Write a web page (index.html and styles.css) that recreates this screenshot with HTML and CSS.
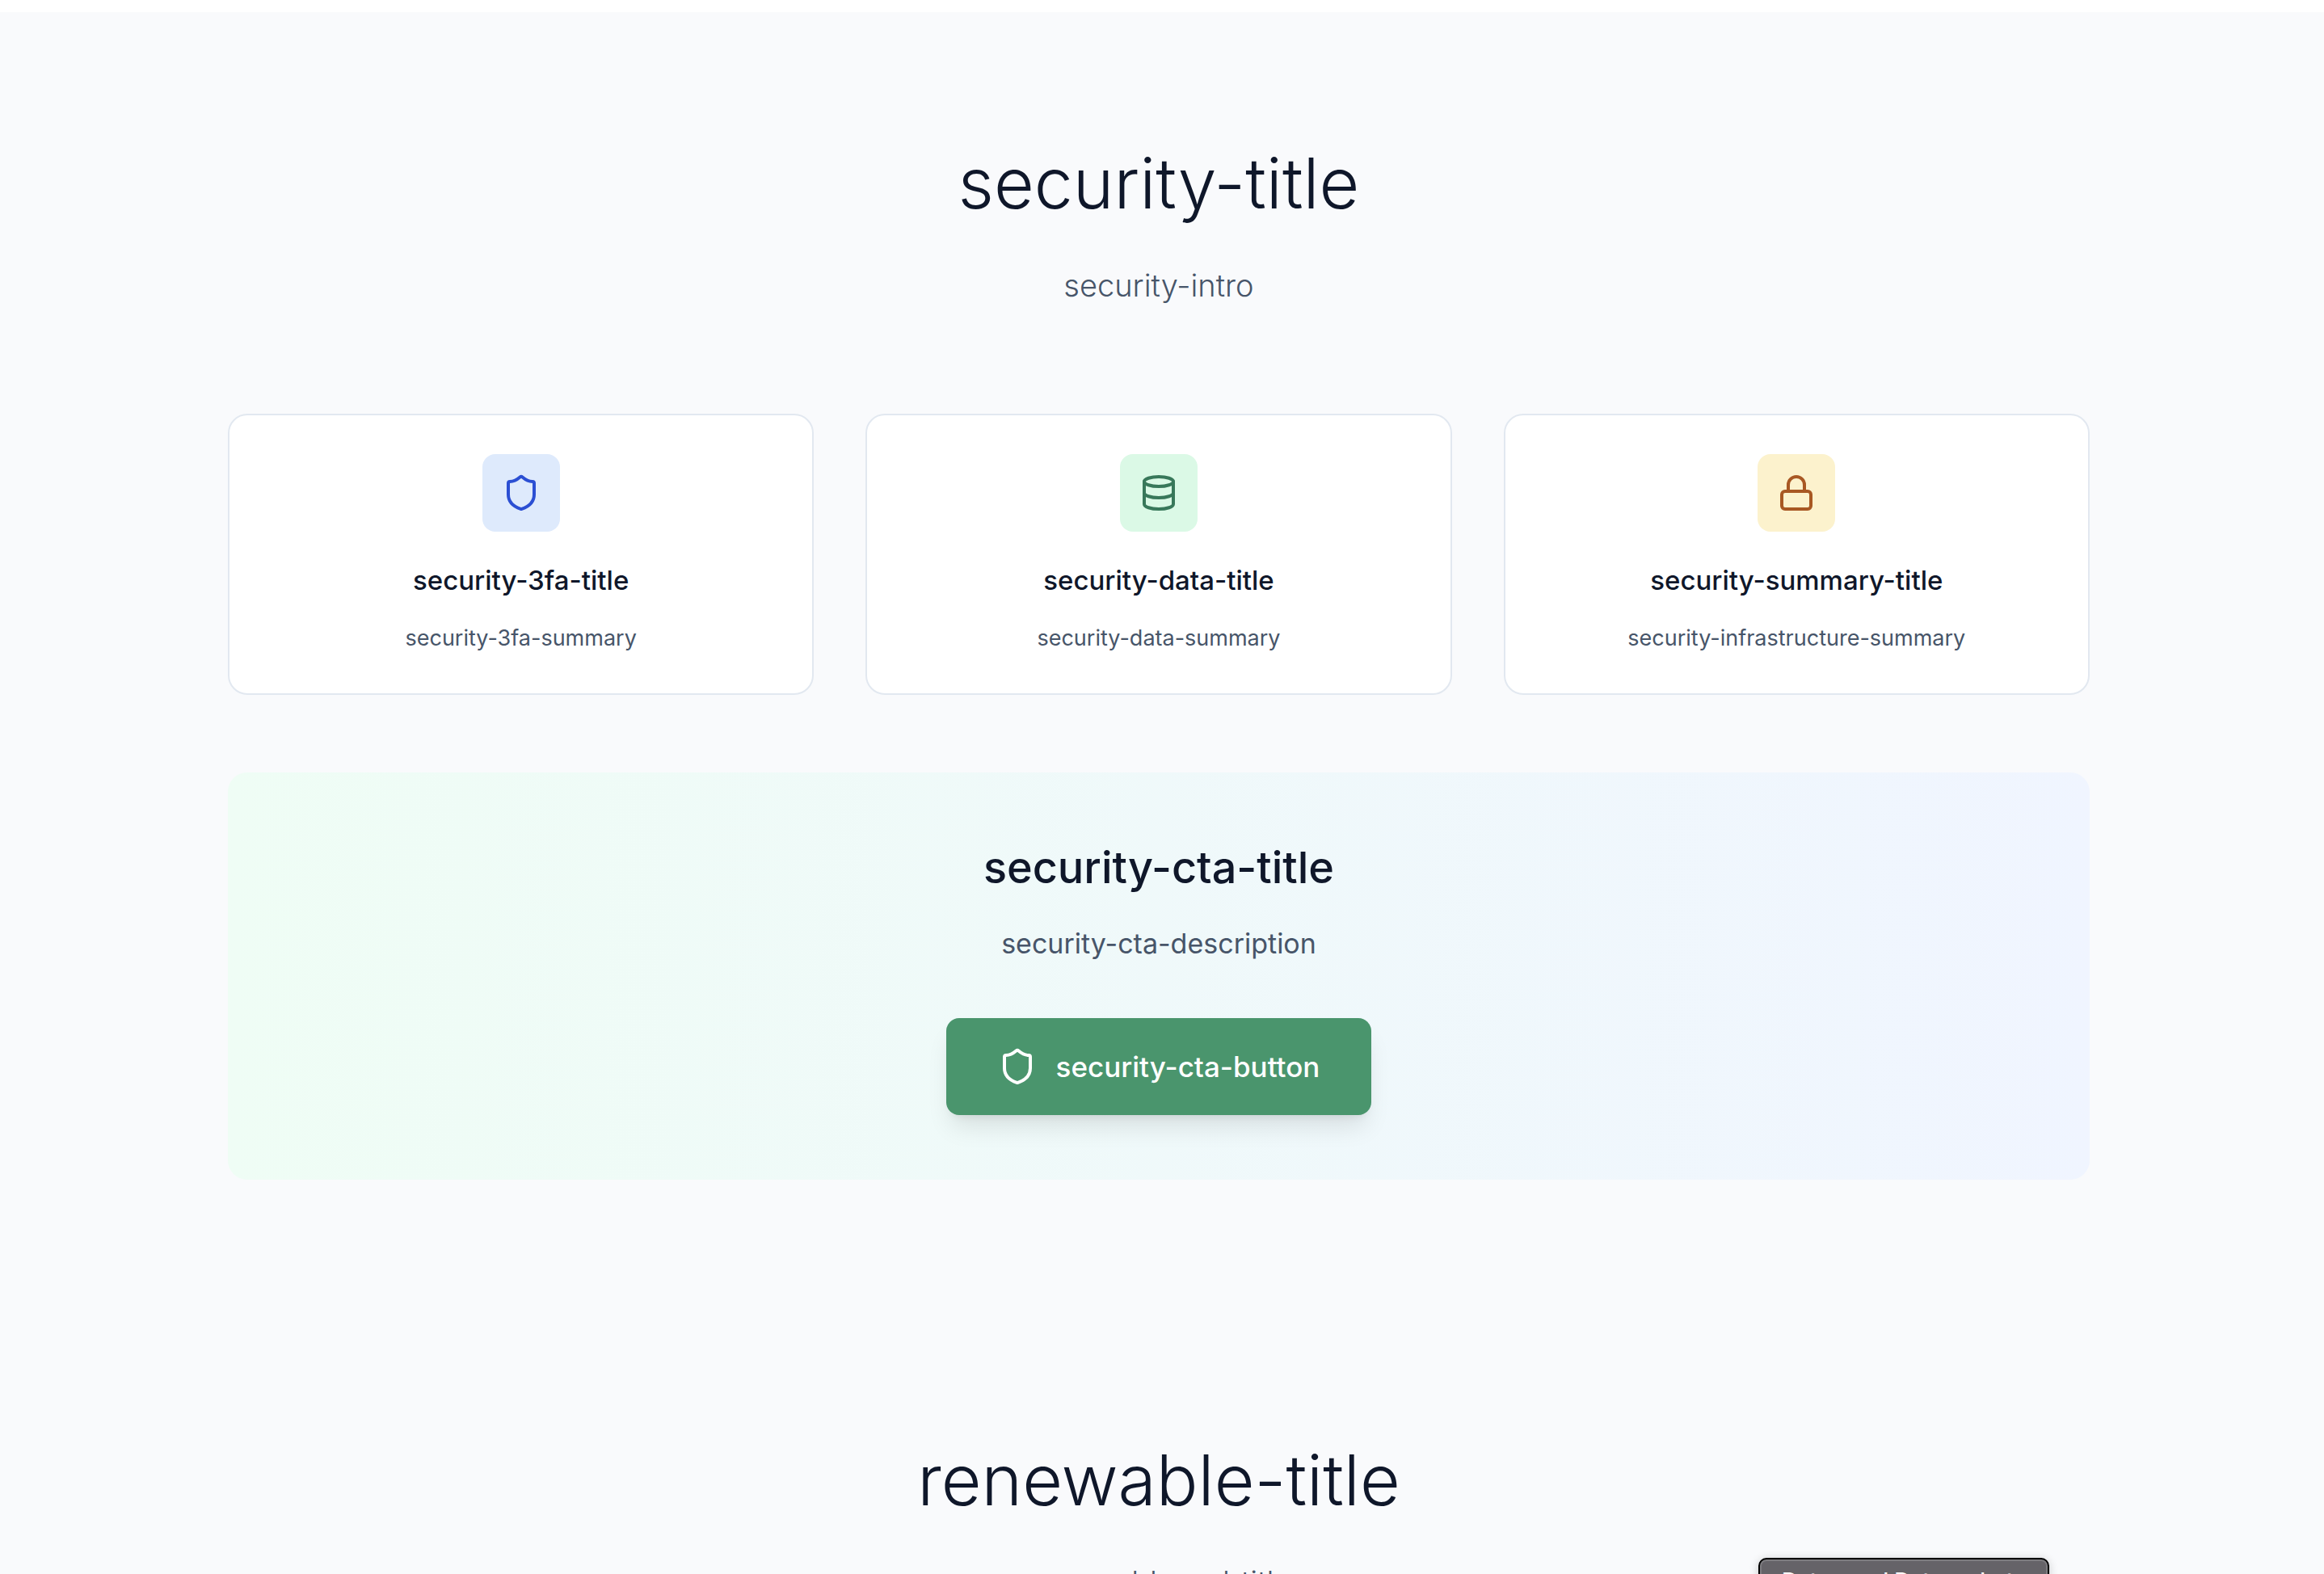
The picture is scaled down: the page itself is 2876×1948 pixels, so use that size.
FILE: index.html
```html
<!DOCTYPE html>
<html lang="en">
<head>
<meta charset="utf-8">
<meta name="viewport" content="width=device-width, initial-scale=1">
<title>Security</title>
<link rel="stylesheet" href="styles.css">
</head>
<body>
<main class="page">
  <section class="section">
    <header class="intro">
      <h2 class="intro-title">security-title</h2>
      <p class="intro-text">security-intro</p>
    </header>
    <div class="cards">
      <article class="card">
        <span class="tile tile-blue">
          <svg class="icon" viewBox="0 0 24 24" aria-hidden="true"><path d="M20 13c0 5-3.5 7.5-7.66 8.95a1 1 0 0 1-.67-.01C7.5 20.5 4 18 4 13V6a1 1 0 0 1 1-1c2 0 4.5-1.2 6.24-2.72a1.17 1.17 0 0 1 1.52 0C14.51 3.81 17 5 19 5a1 1 0 0 1 1 1z"/></svg>
        </span>
        <h3 class="card-title">security-3fa-title</h3>
        <p class="card-text">security-3fa-summary</p>
      </article>
      <article class="card">
        <span class="tile tile-green">
          <svg class="icon" viewBox="0 0 24 24" aria-hidden="true"><ellipse cx="12" cy="5" rx="9" ry="3"/><path d="M3 5v14a9 3 0 0 0 18 0V5"/><path d="M3 12a9 3 0 0 0 18 0"/></svg>
        </span>
        <h3 class="card-title">security-data-title</h3>
        <p class="card-text">security-data-summary</p>
      </article>
      <article class="card">
        <span class="tile tile-amber">
          <svg class="icon" viewBox="0 0 24 24" aria-hidden="true"><rect x="3" y="11" width="18" height="11" rx="2"/><path d="M7 11V7a5 5 0 0 1 10 0v4"/></svg>
        </span>
        <h3 class="card-title">security-summary-title</h3>
        <p class="card-text">security-infrastructure-summary</p>
      </article>
    </div>
    <div class="cta">
      <h3 class="cta-title">security-cta-title</h3>
      <p class="cta-text">security-cta-description</p>
      <button class="button" type="button">
        <svg class="icon" viewBox="0 0 24 24" aria-hidden="true"><path d="M20 13c0 5-3.5 7.5-7.66 8.95a1 1 0 0 1-.67-.01C7.5 20.5 4 18 4 13V6a1 1 0 0 1 1-1c2 0 4.5-1.2 6.24-2.72a1.17 1.17 0 0 1 1.52 0C14.51 3.81 17 5 19 5a1 1 0 0 1 1 1z"/></svg>
        security-cta-button
      </button>
    </div>
  </section>
  <section class="section">
    <header class="intro">
      <h2 class="intro-title">renewable-title</h2>
      <p class="intro-text">renewable-subtitle</p>
    </header>
  </section>
</main>
<div class="tooltip" role="tooltip">Daten und Datenschutz</div>
</body>
</html>
```

FILE: styles.css
```css
* {
  box-sizing: border-box;
}

body {
  margin: 0;
  padding-top: 15px;
  background: #fff;
  color: #0f172a;
  font-family: Inter, "Liberation Sans", sans-serif;
}

h2, h3, p {
  margin: 0;
  font-weight: 400;
}

.page {
  padding-right: 8px;
  background: #f9fafc;
}

.section {
  max-width: 2304px;
  margin: 0 auto;
  padding: 160px 0;
}

.intro {
  display: flex;
  flex-direction: column;
  gap: 44px;
  margin-bottom: 129px;
  text-align: center;
}

.intro-title {
  font-size: 86px;
  line-height: 104px;
  font-weight: 350;
}

.intro-text {
  color: #475569;
  font-size: 38px;
  line-height: 60px;
  font-weight: 350;
}

.cards {
  display: grid;
  grid-template-columns: repeat(3, 1fr);
  gap: 64px;
  margin-bottom: 96px;
}

.card {
  display: flex;
  flex-direction: column;
  align-items: center;
  padding: 48px;
  border: 2px solid #e2e8f0;
  border-radius: 24px;
  background: #fff;
  text-align: center;
}

.tile {
  display: grid;
  place-items: center;
  width: 96px;
  height: 96px;
  margin-bottom: 32px;
  border-radius: 16px;
}

.tile-blue {
  background: #deeafc;
  color: #2b4fd3;
}

.tile-green {
  background: #dbf9e6;
  color: #38785a;
}

.tile-amber {
  background: #fcf2cd;
  color: #a85823;
}

.icon {
  width: 48px;
  height: 48px;
  fill: none;
  stroke: currentColor;
  stroke-width: 2;
  stroke-linecap: round;
  stroke-linejoin: round;
}

.card-title {
  margin-bottom: 24px;
  font-size: 33px;
  line-height: 56px;
  font-weight: 500;
}

.card-text {
  color: #475569;
  font-size: 27px;
  line-height: 40px;
}

.cta {
  display: flex;
  flex-direction: column;
  align-items: center;
  padding: 80px;
  border-radius: 24px;
  background: linear-gradient(to right, #effdf5, #f0f5ff);
  text-align: center;
}

.cta-title {
  margin-bottom: 24px;
  font-size: 54px;
  line-height: 76px;
  font-weight: 500;
}

.cta-text {
  margin-bottom: 60px;
  color: #475569;
  font-size: 34px;
  line-height: 64px;
}

.button {
  display: flex;
  align-items: center;
  gap: 24px;
  height: 120px;
  padding: 0 64px;
  border: 0;
  border-radius: 16px;
  background: #4a956d;
  color: #fff;
  font: inherit;
  font-size: 35px;
  font-weight: 500;
  box-shadow: 0 20px 30px -6px rgb(0 0 0 / 10%), 0 8px 12px -8px rgb(0 0 0 / 10%);
}

.tooltip {
  position: absolute;
  top: 1928px;
  right: 340px;
  width: 360px;
  padding: 10px 0;
  border: 2px solid #000;
  border-radius: 10px;
  background: #656368;
  box-shadow: inset 0 0 0 2px #7d7c80, 0 2px 12px rgb(0 0 0 / 20%);
  color: #fff;
  font-size: 27px;
  font-weight: 500;
  line-height: 34px;
  text-align: center;
  white-space: nowrap;
}
```
